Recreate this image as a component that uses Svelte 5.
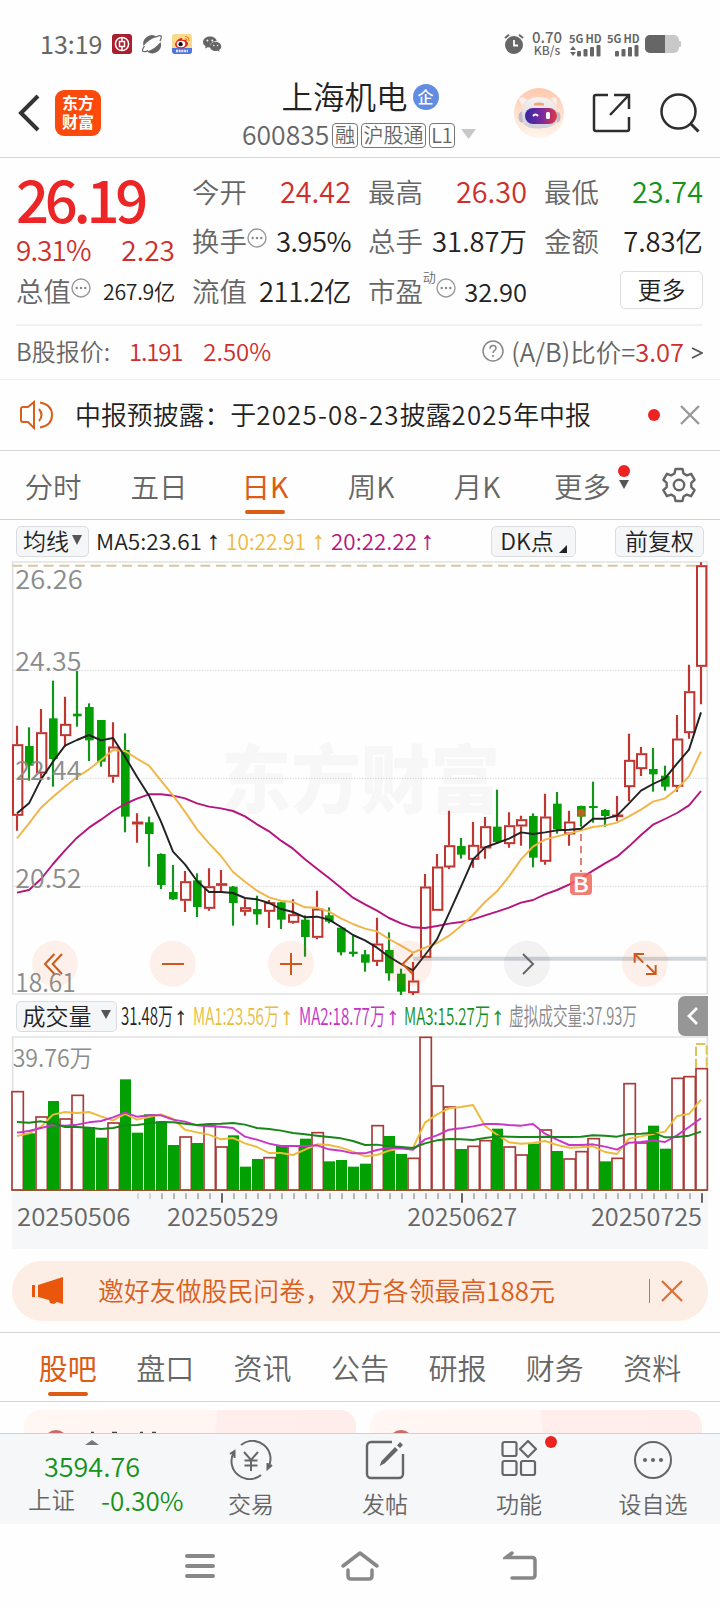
<script lang="ts">
	// y positions are stored in chart units, 3 units per pixel
	const STEP = 36;
	const START = 51;
	const cx = (i: number) => START + STEP * i;

	// [up, high, body top, body bottom, low]
	const candles = [
		[1, 497, 553, 767, 812], [0, 502, 558, 617, 662], [1, 447, 517, 640, 660], [0, 362, 475, 597, 680],
		[1, 410, 492, 528, 560], [0, 333, 461, 469, 500], [0, 430, 441, 541, 603], [0, 480, 480, 605, 620],
		[1, 487, 560, 650, 668], [0, 520, 570, 770, 817], [1, 760, 785, 793, 848], [0, 770, 787, 822, 920],
		[0, 880, 882, 975, 987], [0, 915, 996, 1018, 1020], [1, 933, 964, 1022, 1056], [0, 940, 961, 1041, 1071],
		[1, 925, 979, 1046, 1052], [1, 930, 970, 976, 997], [0, 978, 980, 1029, 1097], [1, 1018, 1042, 1055, 1067],
		[0, 1007, 1047, 1063, 1094], [1, 1020, 1027, 1055, 1104], [0, 1025, 1027, 1079, 1107], [1, 1018, 1063, 1088, 1091],
		[0, 1066, 1079, 1131, 1190], [1, 992, 1046, 1133, 1138], [0, 1042, 1066, 1085, 1090], [0, 1103, 1103, 1177, 1186],
		[0, 1127, 1175, 1182, 1190], [0, 1170, 1183, 1208, 1235], [1, 1073, 1151, 1205, 1218], [0, 1117, 1170, 1240, 1262],
		[0, 1226, 1241, 1295, 1305], [1, 1206, 1262, 1299, 1305], [1, 942, 980, 1193, 1193], [1, 882, 920, 1052, 1052],
		[1, 752, 856, 922, 927], [0, 834, 858, 884, 896], [1, 786, 855, 899, 923], [1, 771, 799, 865, 896],
		[0, 689, 800, 846, 852], [1, 757, 796, 852, 863], [1, 767, 778, 799, 857], [0, 760, 768, 893, 922],
		[1, 701, 770, 905, 914], [0, 696, 731, 808, 821], [1, 752, 785, 823, 857], [0, 737, 738, 770, 800],
		[0, 665, 738, 744, 788], [0, 747, 750, 768, 800], [1, 708, 764, 770, 783], [1, 521, 600, 681, 724],
		[1, 561, 580, 627, 648], [0, 564, 627, 643, 695], [0, 617, 647, 680, 692], [1, 465, 536, 680, 695],
		[1, 314, 394, 519, 536], [1, 7, 16, 320, 433]
	];

	const ma5 = [
		760, 730, 658, 605, 557, 540, 525, 541, 534, 590, 650, 707, 785, 875, 913, 963, 996, 996, 999, 1014, 1018,
		1029, 1047, 1056, 1072, 1070, 1079, 1101, 1125, 1141, 1163, 1190, 1212, 1231, 1185, 1138, 1060, 980, 898,
		862, 849, 836, 817, 822, 817, 811, 809, 806, 776, 776, 767, 730, 692, 672, 655, 611, 569, 457
	];
	const ma10 = [
		835, 790, 743, 710, 680, 651, 628, 600, 570, 573, 596, 617, 662, 706, 755, 808, 850, 888, 936, 965, 992,
		1012, 1022, 1026, 1042, 1043, 1055, 1075, 1092, 1106, 1114, 1137, 1157, 1178, 1163, 1149, 1127, 1098, 1065,
		1026, 994, 949, 898, 860, 839, 829, 821, 811, 801, 796, 788, 769, 749, 725, 715, 687, 649, 575
	];
	const ma20 = [
		998, 990, 957, 912, 871, 833, 803, 779, 753, 732, 716, 703, 703, 707, 715, 730, 740, 745, 753, 769, 793,
		814, 842, 866, 898, 926, 954, 983, 1013, 1033, 1052, 1074, 1090, 1102, 1104, 1098, 1091, 1086, 1078, 1066,
		1055, 1043, 1028, 1020, 1003, 990, 974, 955, 932, 910, 890, 859, 825, 794, 777, 759, 736, 693
	];

	// positive: rising day, negative: falling day
	const volumes = [
		305, -430, 381, -333, 387, 316, -411, -443, 399, -268, -428, -373, -394, -465, 441, -459, 408, 471, -436,
		-530, -507, 503, -468, 468, -446, 428, -514, -510, -530, -521, 407, -438, -492, 505, 142, 288, 351, -477,
		469, 452, -416, 471, 495, -461, 420, -483, 507, 485, 446, -514, 505, 281, 459, -407, -476, 265, 260, 236
	];
	const vol1 = [
		438, 430, 410, 374, 366, 369, 366, 379, 391, 372, 389, 381, 373, 386, 419, 427, 434, 448, 444, 460, 471,
		489, 489, 495, 479, 463, 465, 473, 485, 499, 495, 482, 476, 474, 398, 373, 355, 351, 345, 408, 434, 457,
		461, 459, 453, 465, 473, 472, 469, 486, 492, 446, 439, 432, 425, 378, 372, 329
	];
	const vol2 = [
		428, 423, 414, 405, 407, 404, 397, 393, 382, 368, 380, 376, 376, 389, 395, 406, 409, 410, 414, 440, 449,
		461, 468, 468, 468, 466, 478, 482, 490, 490, 480, 473, 475, 479, 448, 436, 419, 415, 409, 402, 402, 405,
		407, 402, 431, 449, 465, 465, 463, 470, 479, 458, 456, 451, 456, 436, 411, 385
	];
	const vol3 = [
		396, 398, 394, 400, 411, 411, 413, 417, 414, 406, 405, 400, 396, 397, 401, 405, 402, 401, 399, 404, 414,
		417, 422, 429, 433, 437, 441, 445, 453, 465, 464, 469, 471, 474, 460, 451, 447, 448, 450, 444, 439, 440,
		441, 441, 440, 441, 441, 440, 436, 437, 440, 432, 431, 428, 442, 441, 437, 425
	];

	const line = (ys: number[]) => ys.map((y, i) => `${cx(i)},${y}`).join(' ');

	const scale = [
		{ text: '26.26', y: 88, w: 202 },
		{ text: '24.35', y: 333, w: 198 },
		{ text: '22.44', y: 661, w: 198 },
		{ text: '20.52', y: 984, w: 198 },
		{ text: '18.61', y: 1297, w: 181 }
	];
	const dates = [
		{ text: '20250506', x: 51, w: 340 },
		{ text: '20250529', x: 501, w: 334 },
		{ text: '20250627', x: 1222, w: 330 },
		{ text: '20250725', x: 1773, w: 333 }
	];
	const ticks = Array.from({ length: 48 }, (_, k) => 414 + STEP * k);

	const periods = ['分时', '五日', '日K', '周K', '月K'];
	const sections = ['股吧', '盘口', '资讯', '公告', '研报', '财务', '资料'];
</script>

{#snippet fit(text, x, w, y, size, color)}
	<text {x} {y} textLength={w} lengthAdjust="spacingAndGlyphs" font-size={size} fill={color}>{text}</text>
{/snippet}

{#snippet up(x, y, size, color)}
	<text class="arrow" {x} {y} font-size={size} fill={color} stroke={color}>↑</text>
{/snippet}

{#snippet more()}
	<svg class="more-dot" width="20" height="20" viewBox="0 0 20 20">
		<circle cx="10" cy="10" r="9" fill="none" stroke="#999" stroke-width="1.4" />
		<g fill="#888"><circle cx="5.7" cy="10" r="1.2" /><circle cx="10" cy="10" r="1.2" /><circle cx="14.3" cy="10" r="1.2" /></g>
	</svg>
{/snippet}

<div class="screen">
	<div class="status">
		<span class="clock">13:19</span>
		<svg width="20" height="20" viewBox="0 0 20 20">
			<rect width="20" height="20" rx="3" fill="#a81f2d" />
			<circle cx="10" cy="10" r="6.6" fill="none" stroke="#fff" stroke-width="1.5" />
			<path d="M10 3v4M10 13v4M7.500 7.500h5v5h-5z" fill="none" stroke="#fff" stroke-width="1.5" />
		</svg>
		<svg width="20" height="20" viewBox="0 0 20 20">
			<path d="M1.500 12A8.600 8.600 0 0 1 15 3Q7 5 1.500 12z" fill="#666" />
			<path d="M18.500 8A8.600 8.600 0 0 1 5 17.500Q13 15 18.500 8z" fill="#666" />
			<path d="M2.500 12Q-1 17 1.500 17.500T6 16.500M14 3q4-2 5-1t-1 5" fill="none" stroke="#666" stroke-width="1.200" />
		</svg>
		<svg width="20" height="20" viewBox="0 0 20 20">
			<rect width="20" height="20" rx="3" fill="#fbd98a" />
			<path d="M0 14h20v3a3 3 0 0 1-3 3H3a3 3 0 0 1-3-3z" fill="#4f74e0" />
			<path d="M3 10q2-5 6-6 2 0 1.500 2 4-1 4 1.200 2.500 2 1 4-2.500 3.500-7 3.300Q3 14 3 10z" fill="#e0261c" />
			<ellipse cx="9" cy="10" rx="4.300" ry="3.200" fill="#fff" />
			<circle cx="8.600" cy="10.200" r="2.100" fill="#111" />
			<path d="M13 2.500q4 0 4 4.500M13 4.800q2 0 2 2" fill="none" stroke="#ee8a1c" stroke-width="1.200" />
			<path d="M4 17h12" stroke="#dfe7ff" stroke-width="2.500" stroke-dasharray="2 .7" />
		</svg>
		<svg width="20" height="20" viewBox="0 0 20 20">
			<path d="M8 2.500c-4.300 0-7 2.500-7 5.500 0 1.800 1 3.200 2.600 4.200L3 14.500l2.600-1.300 2.400.3c-.6-4 2.500-6.500 6.800-6.300C14.300 4.400 11.500 2.500 8 2.500z" fill="#666" />
			<path d="M13.600 8c-3.500 0-5.700 2-5.700 4.600s2.500 4.500 5.700 4.500l2-.3 2 1-.5-1.700c1.400-.9 2.200-2 2.200-3.500C19.300 10 17 8 13.600 8z" fill="#666" />
			<g fill="#fff"><circle cx="5.500" cy="6.500" r=".9" /><circle cx="10.300" cy="6.500" r=".9" /><circle cx="11.800" cy="11.500" r=".7" /><circle cx="15.500" cy="11.500" r=".7" /></g>
		</svg>
		<div class="status-right">
			<svg width="20" height="20" viewBox="0 0 20 20">
				<circle cx="10" cy="11" r="9" fill="#666" />
				<path d="M10 6v5.500h4" fill="none" stroke="#fff" stroke-width="1.800" />
				<path d="M1 4l4-3.200M19 4l-4-3.200" stroke="#666" stroke-width="2" />
			</svg>
			<div class="speed"><b>0.70</b><span>KB/s</span></div>
			{#each [true, false] as data}
				<div class="signal">
					<b>5G HD</b>
					<svg width="32" height="12" viewBox="0 0 32 12" fill="#666">
						{#if data}<path d="M1 5l3-4 3 4zM1 7l3 4 3-4z" />{/if}
						<rect x="8" y="6" width="4" height="5.500" rx="1" /><rect x="14.500" y="4" width="4" height="7.500" rx="1" />
						<rect x="21" y="2" width="4" height="9.500" rx="1" /><rect x="27.500" y="0" width="4" height="11.500" rx="1" />
					</svg>
				</div>
			{/each}
			<svg width="36" height="18" viewBox="0 0 36 18">
				<rect width="34" height="18" rx="5" fill="#c9c9c9" /><rect x="33" y="6" width="3" height="6" rx="1" fill="#c9c9c9" />
				<path d="M5 0h15v18H5a5 5 0 0 1-5-5V5a5 5 0 0 1 5-5z" fill="#666" />
			</svg>
		</div>
	</div>

	<header>
		<div class="head-left">
			<svg width="22" height="38" viewBox="0 0 22 38"><path d="M20 2L3 19l17 17" fill="none" stroke="#333" stroke-width="4" /></svg>
			<div class="logo"><span>东方</span><span>财富</span></div>
		</div>
		<div class="head-mid">
			<div class="title">上海机电<span class="badge">企</span></div>
			<div class="code">
				<span class="num">600835</span><i>融</i><i class="wide">沪股通</i><i>L1</i>
				<svg width="15" height="10" viewBox="0 0 15 10"><path d="M0 0h15L7.500 10z" fill="#c8c8c8" /></svg>
			</div>
		</div>
		<div class="head-right">
			<svg width="50" height="50" viewBox="0 0 50 50">
				<defs>
					<linearGradient id="halo" x2="0" y2="1"><stop stop-color="#ffc9ac" /><stop offset="1" stop-color="#fff5ee" /></linearGradient>
					<linearGradient id="shell" x2="0" y2="1"><stop stop-color="#f8f3f2" /><stop offset="1" stop-color="#d2ced8" /></linearGradient>
					<linearGradient id="visor"><stop stop-color="#3427a0" /><stop offset=".55" stop-color="#7d2a9c" /><stop offset="1" stop-color="#e5383d" /></linearGradient>
				</defs>
				<circle cx="25" cy="25" r="25" fill="url(#halo)" />
				<path d="M5 11q4-4 8 1l-5 6zM37 10q5-2 6 2l-1 6z" fill="#f7f0ee" />
				<ellipse cx="8" cy="29" rx="3.500" ry="5.500" fill="#bdbac9" /><ellipse cx="43" cy="29" rx="3.500" ry="5.500" fill="#bdbac9" />
				<path d="M8 24Q10 9 25 9t18 14v11q-5 6.500-18 6.500T9 35z" fill="url(#shell)" />
				<path d="M20 15.500q5-2 10 0v2H20z" fill="#f0a474" />
				<rect x="11" y="20" width="32" height="16" rx="8" fill="url(#visor)" />
				<path d="M19 28q2.500-3 5 0" fill="none" stroke="#fff" stroke-width="2" /><rect x="32" y="24" width="4" height="7" rx="1.500" fill="#fff" />
			</svg>
			<svg width="40" height="40" viewBox="0 0 40 40" fill="none" stroke="#2e2e2e" stroke-width="2.500">
				<path d="M16 2H4a2 2 0 0 0-2 2v32a2 2 0 0 0 2 2h31a2 2 0 0 0 2-2V24M22 2h15v14M36 3L18 22" />
			</svg>
			<svg width="40" height="40" viewBox="0 0 40 40" fill="none" stroke="#2e2e2e" stroke-width="2.500">
				<circle cx="18.500" cy="18.500" r="17" /><path d="M31 31l7.500 7.500" stroke-width="3" />
			</svg>
		</div>
	</header>

	<section class="quote">
		<div class="price">
			<strong>26.19</strong>
			<div class="row red"><span class="pct">9.31%</span><span>2.23</span></div>
		</div>
		<div class="row"><label>今开</label><span class="num red">24.42</span></div>
		<div class="row"><label>最高</label><span class="num red">26.30</span></div>
		<div class="row"><label>最低</label><span class="num green">23.74</span></div>
		<div class="row"><label>换手{@render more()}</label><span class="rate">3.95%</span></div>
		<div class="row"><label>总手</label><span>31.87万</span></div>
		<div class="row"><label>金额</label><span>7.83亿</span></div>
		<div class="row"><label>总值{@render more()}</label><span class="small">267.9亿</span></div>
		<div class="row"><label>流值</label><span class="rate">211.2亿</span></div>
		<div class="row"><label>市盈<sup>动</sup>{@render more()}</label><span class="mid">32.90</span></div>
		<div class="row end"><button class="more-btn">更多</button></div>
	</section>

	<section class="bshare">
		<span>B股报价:</span><span class="red b1">1.191</span><span class="red b2">2.50%</span>
		<span class="ratio">
			<svg width="22" height="22" viewBox="0 0 22 22">
				<circle cx="11" cy="11" r="10" fill="none" stroke="#888" stroke-width="1.500" />
				<path d="M8 8.800q0-3.300 3-3.300t3 2.700q0 1.500-1.500 2.400T11 13" fill="none" stroke="#888" stroke-width="1.500" /><circle cx="11" cy="16" r="1.100" fill="#888" />
			</svg>
			(A/B)比价=<em class="red">3.07</em><svg class="gt" width="12" height="14" viewBox="0 0 12 14"><path d="M1 2l10 5-10 5" fill="none" stroke="#555" stroke-width="1.800" /></svg>
		</span>
	</section>

	<section class="notice">
		<svg width="34" height="30" viewBox="0 0 34 30" fill="none" stroke="#d9601c" stroke-width="2">
			<path d="M14 2v26L8 22H3a2 2 0 0 1-2-2V9a2 2 0 0 1 2-2h5z" /><path d="M19 9q5 6 0 12M20 2.500q12 2 12 12.500T20 27.500" />
		</svg>
		<p>中报预披露：于<em>2025-08-23</em>披露<em>2025</em>年中报</p>
		<i class="dot"></i>
		<svg width="20" height="20" viewBox="0 0 20 20"><path d="M1 1l18 18M19 1L1 19" stroke="#999" stroke-width="2.400" /></svg>
	</section>

	<nav class="periods">
		{#each periods as p}
			<span class:active={p === '日K'}>{p}</span>
		{/each}
		<span class="period-more">更多<svg width="12" height="10" viewBox="0 0 12 10"><path d="M1 0h10L6 9z" fill="#555" /></svg><i class="dot"></i></span>
		<svg class="gear" width="36" height="36" viewBox="0 0 36 36" fill="none" stroke="#666" stroke-width="2.400" stroke-linejoin="round">
			<path d="M14.500 2h7l1 4.500 3.300 1.900 4.300-1.600 3.500 6-3.300 3.100v4.200l3.300 3.100-3.500 6-4.300-1.600-3.300 1.900-1 4.500h-7l-1-4.500-3.300-1.900-4.300 1.600-3.500-6 3.300-3.100v-4.200l-3.300-3.100 3.500-6 4.300 1.600 3.300-1.900z" />
			<circle cx="18" cy="18" r="5.200" />
		</svg>
	</nav>

	<div class="legend">
		<button class="chip">均线<svg width="10" height="10" viewBox="0 0 10 10"><path d="M0 0h10L5 10z" fill="#555" /></svg></button>
		<svg width="380" height="40" viewBox="94 0 380 40">
			{@render fit('MA5:23.61', 96, 106, 28.5, 22, '#222')}
			{@render up(207, 28, 25, '#222')}
			{@render fit('10:22.91', 226, 80, 28.5, 22, '#efb93f')}
			{@render up(312, 28, 25, '#efb93f')}
			{@render fit('20:22.22', 331, 86, 28.5, 22, '#b5157d')}
			{@render up(421, 28, 25, '#b5157d')}
		</svg>
		<button class="chip dk">DK点<svg width="8" height="8" viewBox="0 0 8 8"><path d="M8 0v8H0z" fill="#222" /></svg></button>
		<button class="chip adj">前复权</button>
	</div>

	<svg class="kline" width="720" height="436" viewBox="0 0 2160 1308">
		<g class="watermark">{@render fit('东方财富', 664, 836, 742, 222, '#f7f7f7')}</g>
		<path d="M38 1302V6H2122V1302z" fill="none" stroke="#e2e2e2" stroke-width="5" />
		<path d="M38 331H2122M38 655H2122M38 979H2122" stroke="#c9c9c9" stroke-width="3" stroke-dasharray="3 5" />
		<path d="M26 17H2100" stroke="#d8c6a8" stroke-width="6" stroke-dasharray="30 17" stroke-dashoffset="-11" />
		<path d="M1240 1196H2120" stroke="#cfd4da" stroke-width="12" />
		{#each candles as [rise, high, top, bottom, low], i}
			{#if rise}
				<path d="M{cx(i)} {high}V{top}M{cx(i)} {bottom}V{low}" stroke="#bf3530" stroke-width="6.500" />
				<rect x={cx(i) - 12} y={top + 2.5} width="28" height={Math.max(bottom - top - 5, 2)} fill="none" stroke="#bf3530" stroke-width="6" />
			{:else}
				<path d="M{cx(i)} {high}V{low}" stroke="#12951a" stroke-width="6.500" />
				<rect x={cx(i) - 12} y={top} width="26" height={bottom - top} fill="#02a002" />
			{/if}
		{/each}
		<polyline points={line(ma20)} stroke="#b5157d" class="ma" />
		<polyline points={line(ma10)} stroke="#f0b64a" class="ma" />
		<polyline points={line(ma5)} stroke="#222" class="ma" />
		{#each scale as s}
			{@render fit(s.text, 46, s.w, s.y, 78, '#8c8c8c')}
		{/each}
		<circle cx="1743" cy="758" r="12" fill="#b5651d" />
		<path d="M1743 822V936" stroke="#e07f74" stroke-width="6" stroke-dasharray="22 14" />
		<rect x="1710" y="938" width="66" height="67" rx="12" fill="#ef6558" fill-opacity=".85" />
		<text class="buy" x="1743" y="996" text-anchor="middle">B</text>
		{#each [165, 518, 873, 1227, 1581, 1935] as x}
			<circle cx={x} cy="1211" r="69" fill={x === 1581 ? '#777' : '#f0641e'} fill-opacity=".09" />
		{/each}
		<g fill="none" stroke="#cc5a1c" stroke-width="6">
			<path d="M163 1182l-28 30 28 30M186 1182l-28 30 28 30M486 1212H552M840 1212H906M873 1179V1245M1238 1182l-30 30 30 30" />
			<path d="M1904 1208V1182H1932M1904 1182L1930 1208M1967 1215V1242H1938M1967 1242L1940 1215" />
			<path d="M1569 1182l30 30-30 30" stroke="#666" />
		</g>
	</svg>

	<div class="legend vol">
		<button class="chip">成交量<svg width="10" height="9" viewBox="0 0 10 9"><path d="M0 0h10L5 9z" fill="#555" /></svg></button>
		<svg width="524" height="40" viewBox="118 0 524 40">
			{@render fit('31.48万', 121, 52, 29, 24, '#222')}
			{@render up(175, 28, 24, '#222')}
			{@render fit('MA1:23.56万', 193, 86, 29, 24, '#e8bd3a')}
			{@render up(281, 28, 24, '#e8bd3a')}
			{@render fit('MA2:18.77万', 299, 86, 29, 24, '#c530c5')}
			{@render up(387, 28, 24, '#c530c5')}
			{@render fit('MA3:15.27万', 404, 86, 29, 24, '#14911c')}
			{@render up(492, 28, 24, '#14911c')}
			{@render fit('虚拟成交量:37.93万', 509, 128, 29, 24, '#888')}
		</svg>
		<span class="fold"><svg width="12" height="18" viewBox="0 0 12 18"><path d="M10 1L2 9l8 8" fill="none" stroke="#fff" stroke-width="2.800" /></svg></span>
	</div>

	<svg class="volume" width="720" height="213" viewBox="0 138 2160 639">
		<rect x="36" y="604" width="2088" height="173" fill="#f6f7f9" />
		<path d="M38 602V141H2122V602" fill="none" stroke="#e2e2e2" stroke-width="5" />
		{@render fit('39.76万', 38, 240, 231, 72, '#8c8c8c')}
		{#each volumes as v, i}
			{#if v > 0}
				<rect x={cx(i) - 15} y={v} width="34" height={600 - v} fill="#fff" stroke="#ab3a36" stroke-width="5" />
			{:else}
				<rect x={cx(i) - 15} y={-v} width="33" height={602 + v} fill="#02a002" />
			{/if}
		{/each}
		<path d="M38 601H2122" stroke="#96552f" stroke-width="4" />
		<path d="M2088 234V162H2120V234" fill="none" stroke="#dbc653" stroke-width="6" stroke-dasharray="28 8" />
		<polyline points={line(vol1)} stroke="#edbb3a" class="ma" />
		<polyline points={line(vol2)} stroke="#c836c8" class="ma" />
		<polyline points={line(vol3)} stroke="#19861c" class="ma" />
		{#each ticks as x, k}
			<path d="M{x} 610V{(k - 7) % 20 === 0 ? 638 : 627}" stroke={(k - 7) % 20 === 0 ? '#666' : '#aaa'} stroke-width={(k - 7) % 20 === 0 ? 6 : 5} opacity={k < 2 ? 0.5 : 1} />
		{/each}
		{#each dates as d}
			{@render fit(d.text, d.x, d.w, 708, 74, '#666')}
		{/each}
	</svg>

	<div class="banner">
		<svg width="32" height="28" viewBox="0 0 32 28" fill="#e9570d"><path d="M0 8h3v12H0zM6 8L31 0v27l-6-2-3 2-4-1-1-3L6 20z" /></svg>
		<p>邀好友做股民问卷，双方各领最高188元</p>
		<i></i>
		<svg width="22" height="22" viewBox="0 0 22 22"><path d="M1 1l20 20M21 1L1 21" stroke="#dc7038" stroke-width="2.200" /></svg>
	</div>

	<nav class="sections">
		{#each sections as s, i}
			<span class:active={i === 0}>{s}</span>
		{/each}
	</nav>

	<div class="cards">
		<div class="card">
			<svg width="332" height="23" viewBox="0 0 332 23">
				<path d="M194 0h138v23H191z" fill="#ffe9e7" opacity=".6" />
				<circle cx="32" cy="32" r="12" fill="#c96a68" />
				<path d="M67 22.500h3M88 22.500h5M116 22.500h3M128 22.500h4" stroke="#444" stroke-width="1.500" />
			</svg>
		</div>
		<div class="card">
			<svg width="332" height="23" viewBox="0 0 332 23">
				<path d="M171 0h161v23H173z" fill="#ffe9e7" opacity=".6" />
				<circle cx="31" cy="32" r="12" fill="#c96a68" />
			</svg>
		</div>
	</div>

	<div class="toolbar">
		<div class="index">
			<svg width="14" height="5" viewBox="0 0 14 5"><path d="M0 5l7-5 7 5z" fill="#777" /></svg>
			<span class="green point">3594.76</span>
			<div><span>上证</span><span class="green chg">-0.30%</span></div>
		</div>
		<div class="tool">
			<svg width="44" height="40" viewBox="0 0 44 40" fill="none" stroke="#666" stroke-width="2">
				<path d="M12 5A18 18 0 0 1 39 28M43 25l-4.500 4v-6M32 35A18 18 0 0 1 5 12M1 14l4.500-3v7M15 12l7 8 7-8M22 20v11M15.500 20.500h13M15.500 25.500h13" />
			</svg>
			<span>交易</span>
		</div>
		<div class="tool">
			<svg width="40" height="40" viewBox="0 0 40 40" fill="none" stroke="#666" stroke-width="2.400">
				<path d="M27 2H6a4 4 0 0 0-4 4v28a4 4 0 0 0 4 4h28a4 4 0 0 0 4-4V14" />
				<path d="M14.500 26l2-5L30 7l3 3-13.500 13.500zM32 5.500l3-3.500 3 3-3 3z" fill="#666" stroke="none" />
			</svg>
			<span>发帖</span>
		</div>
		<div class="tool">
			<svg width="36" height="38" viewBox="0 0 36 38" fill="none" stroke="#666" stroke-width="2.200">
				<rect x="1.500" y="2" width="14" height="14" rx="2" /><rect x="1.500" y="21" width="14" height="14" rx="2" /><rect x="20" y="21" width="14" height="14" rx="2" /><path d="M27 1l8 8-8 8-8-8z" stroke-linejoin="round" />
			</svg>
			<span>功能</span>
			<i class="dot"></i>
		</div>
		<div class="tool">
			<svg width="40" height="40" viewBox="0 0 40 40">
				<circle cx="20" cy="20" r="18" fill="none" stroke="#666" stroke-width="2" />
				<g fill="#666"><circle cx="12" cy="20" r="2.100" /><circle cx="20" cy="20" r="2.100" /><circle cx="28" cy="20" r="2.100" /></g>
			</svg>
			<span>设自选</span>
		</div>
	</div>

	<div class="sysnav">
		<svg width="32" height="30" viewBox="0 0 32 30"><path d="M3 5H29M3 15H29M3 25H29" stroke="#888" stroke-width="4" stroke-linecap="round" /></svg>
		<svg width="38" height="30" viewBox="0 0 38 30" fill="none" stroke="#888" stroke-width="3.500" stroke-linecap="round" stroke-linejoin="round"><path d="M2 15L19 2l17 13M7 19v6q0 3 3 3h18q3 0 3-3v-6" /></svg>
		<svg width="34" height="30" viewBox="0 0 34 30" fill="none" stroke="#888" stroke-width="3.500" stroke-linecap="round"><path d="M9 2L3 6.500H29q3 0 3 3V24q0 3-3 3H9" /></svg>
	</div>
</div>

<style>
	:global(body) {
		margin: 0;
		background: #fff;
	}

	.screen {
		width: 720px;
		height: 1608px;
		overflow: hidden;
		background: #fefefe;
		font-family: 'Noto Sans CJK SC', 'Noto Sans', sans-serif;
		color: #666;
		font-weight: 350;
		line-height: 1;
	}

	svg {
		display: block;
		flex: none;
	}

	i,
	em {
		font-style: normal;
	}

	button {
		font: inherit;
		padding: 0;
	}

	.red {
		color: #cf2f2c;
	}

	.green {
		color: #15931a;
	}

	.dot {
		width: 12px;
		height: 12px;
		border-radius: 50%;
		background: #ed2323;
		flex: none;
	}

	.arrow {
		font-family: 'Liberation Sans', sans-serif;
		stroke-width: 0.4;
	}

	.status {
		height: 76px;
		box-sizing: border-box;
		padding: 12px 39px 0 40px;
		display: flex;
		align-items: center;
		gap: 10px;
	}

	.clock {
		font-size: 25px;
		font-weight: 400;
		width: 62px;
		margin-top: -2px;
	}

	.status-right {
		margin-left: auto;
		display: flex;
		align-items: center;
		gap: 6px;
	}

	.speed {
		display: flex;
		flex-direction: column;
		align-items: center;
		width: 34px;
		margin-right: -1px;
		margin-top: -2px;
		font-size: 12px;
		font-weight: 500;
		line-height: 12px;
	}

	.speed b {
		font-size: 15px;
		font-weight: 500;
		line-height: 14px;
	}

	.signal {
		display: flex;
		flex-direction: column;
		gap: 1px;
		width: 32px;
		font-size: 11px;
		line-height: 12px;
		white-space: nowrap;
	}

	.signal b {
		font-weight: 700;
		letter-spacing: -0.1px;
	}

	header {
		height: 81px;
		border-bottom: 1px solid #d5d5d5;
		display: grid;
		grid-template-columns: 230px 258px 232px;
	}

	.head-left {
		display: flex;
		align-items: center;
		gap: 15px;
		padding-left: 18px;
		padding-bottom: 8px;
	}

	.logo {
		width: 46px;
		height: 46px;
		border-radius: 9px;
		background: #fb4a0b;
		color: #fff;
		font-size: 16px;
		font-weight: 700;
		display: flex;
		flex-direction: column;
		align-items: center;
		justify-content: center;
		gap: 3px;
		padding-bottom: 2px;
		box-sizing: border-box;
	}

	.head-mid {
		display: flex;
		flex-direction: column;
		align-items: center;
	}

	.title {
		display: flex;
		align-items: center;
		height: 39px;
		font-size: 31.500px;
		color: #222;
		gap: 5px;
		padding-left: 2px;
	}

	.badge {
		width: 26px;
		height: 26px;
		border-radius: 50%;
		background: #628be2;
		color: #fff;
		font-size: 16px;
		font-weight: 500;
		line-height: 25px;
		text-align: center;
		margin-top: 3px;
	}

	.code {
		display: flex;
		align-items: center;
		gap: 3px;
		height: 38px;
	}

	.code .num {
		font-size: 26.500px;
		width: 88px;
		margin-right: -1px;
	}

	.code i {
		border: 1px solid #777;
		border-radius: 4px;
		width: 24px;
		height: 23px;
		line-height: 22px;
		font-size: 20px;
		text-align: center;
		margin-top: 2px;
	}

	.code .wide {
		width: 63px;
	}

	.code svg {
		margin-left: 3px;
	}

	.head-right {
		display: flex;
		align-items: center;
		gap: 28px;
		padding-left: 26px;
		padding-bottom: 8px;
	}

	.quote {
		margin: 0 17px 0 16px;
		padding-top: 10px;
		box-sizing: border-box;
		border-bottom: 2px solid #f2f2f2;
		height: 168px;
		display: grid;
		grid-template-columns: repeat(4, 159px);
		grid-template-rows: 47px 51px 49px;
		column-gap: 17px;
		font-size: 27.4px;
		color: #222;
	}

	.price {
		grid-row: span 2;
	}

	.price strong {
		display: block;
		height: 64px;
		line-height: 60px;
		font-size: 58px;
		font-weight: 500;
		color: #ec2526;
		letter-spacing: -4.3px;
	}

	.row {
		display: flex;
		align-items: center;
		justify-content: space-between;
		white-space: nowrap;
	}

	.price .row {
		height: 34px;
		font-size: 28px;
	}

	.row .num {
		font-size: 28.8px;
	}

	.end {
		justify-content: flex-end;
	}

	.row label {
		display: flex;
		align-items: center;
		color: #666;
	}

	.pct {
		letter-spacing: -0.9px;
	}

	.rate {
		letter-spacing: -0.5px;
	}

	.row .small {
		font-size: 21.3px;
		letter-spacing: -0.3px;
	}

	.row .mid {
		font-size: 25.500px;
	}

	sup {
		font-size: 13px;
		align-self: flex-start;
		margin-top: -7px;
	}

	.more-dot {
		margin-top: -5px;
	}

	.more-btn {
		width: 83px;
		height: 38px;
		border: 1px solid #dcdfe0;
		border-radius: 5px;
		background: #fff;
		color: #222;
		font-size: 24px;
		line-height: 30px;
		padding-bottom: 3px;
		margin-bottom: 1px;
	}

	.bshare {
		height: 54px;
		box-sizing: border-box;
		padding: 0 17px 3px 16px;
		border-bottom: 1px solid #eee;
		display: flex;
		align-items: center;
		font-size: 24px;
	}

	.b1 {
		margin-left: 19px;
		letter-spacing: -1.2px;
	}

	.b2 {
		margin-left: 21px;
	}

	.ratio {
		margin-left: auto;
		display: flex;
		align-items: center;
		font-size: 25.500px;
	}

	.ratio svg:first-child {
		margin-right: 7px;
	}

	.ratio .gt {
		margin: 3px 0 0 7px;
	}

	.notice {
		height: 70px;
		border-bottom: 1px solid #d5d5d5;
		display: flex;
		align-items: center;
		padding: 0 20px;
		color: #222;
	}

	.notice p {
		margin: -2px 0 0 21px;
		width: 573px;
		font-size: 25.900px;
		white-space: nowrap;
	}

	.notice em {
		letter-spacing: 1.2px;
	}

	.notice .dot {
		margin-right: 20px;
	}

	.periods {
		height: 68px;
		border-bottom: 1px solid #d5d5d5;
		display: grid;
		grid-template-columns: repeat(6, 106px) 1fr;
		grid-template-rows: 68px;
		justify-items: center;
		font-size: 28.500px;
		line-height: 69px;
	}

	.periods .active,
	.sections .active {
		color: #dd5c14;
		position: relative;
		font-weight: 400;
	}

	.active::after {
		content: '';
		position: absolute;
		left: 50%;
		bottom: 5px;
		width: 40px;
		height: 4px;
		margin-left: -20px;
		border-radius: 2px;
		background: #dd5c14;
	}

	.period-more {
		position: relative;
		display: flex;
		align-items: center;
		padding-left: 18px;
		gap: 7px;
	}

	.period-more .dot {
		position: absolute;
		right: 0;
		top: 14px;
	}

	.gear {
		align-self: center;
		margin-left: 2px;
	}

	.legend {
		height: 40px;
		display: flex;
		align-items: center;
		padding: 2px 16px 0;
		box-sizing: border-box;
	}

	.chip {
		height: 31px;
		width: 73px;
		box-sizing: border-box;
		border: 1px solid #d9dde1;
		border-radius: 5px;
		background: #f5f6f8;
		color: #222;
		font-size: 23px;
		line-height: 26px;
		white-space: nowrap;
		display: flex;
		align-items: center;
		justify-content: center;
		gap: 3px;
		padding-bottom: 3px;
	}

	.legend > svg {
		margin-left: 5px;
		overflow: visible;
	}

	.dk {
		width: 85px;
		margin-left: 17px;
		gap: 5px;
	}

	.dk svg {
		align-self: flex-end;
	}

	.adj {
		width: 89px;
		margin-left: 39px;
	}

	.vol {
		height: 40px;
		padding: 0 12px 0 16px;
	}

	.vol .chip {
		width: 101px;
		gap: 9px;
	}

	.vol > svg {
		margin-left: 1px;
	}

	.fold {
		margin-left: auto;
		width: 30px;
		height: 40px;
		border-radius: 7px 0 0 7px;
		background: #969696;
		display: flex;
		align-items: center;
		justify-content: center;
	}

	.watermark {
		font-weight: 900;
	}

	.ma {
		fill: none;
		stroke-width: 5.800;
		stroke-linejoin: round;
	}

	.buy {
		font-family: 'Liberation Sans', sans-serif;
		font-size: 68px;
		font-weight: 400;
		fill: #fff;
		stroke: #fff;
		stroke-width: 2;
	}

	.banner {
		margin: 12px 12px 11px;
		height: 60px;
		border-radius: 30px;
		background: #fdeee5;
		color: #d9601c;
		display: flex;
		align-items: center;
		padding: 0 24px 0 20px;
	}

	.banner p {
		margin: -2px 0 0 34px;
		width: 551px;
		font-size: 25.900px;
		white-space: nowrap;
	}

	.banner i {
		width: 1px;
		height: 24px;
		background: #c8743f;
		margin-right: 11px;
	}

	.sections {
		height: 68px;
		border-top: 1px solid #d5d5d5;
		border-bottom: 1px solid #d5d5d5;
		padding: 0 19px;
		display: grid;
		grid-template-columns: repeat(7, 1fr);
		text-align: center;
		font-size: 29px;
		line-height: 68px;
	}

	.cards {
		height: 31px;
		box-sizing: border-box;
		padding: 8px 18px 0 24px;
		display: flex;
		gap: 14px;
		overflow: hidden;
	}

	.card {
		width: 332px;
		height: 60px;
		flex: none;
		border-radius: 16px;
		overflow: hidden;
		background: linear-gradient(90deg, #fff7f4, #fff3f1);
	}

	.toolbar {
		height: 91px;
		box-sizing: border-box;
		border-top: 1px solid #cfd1d6;
		background: #f6f7f9;
		display: grid;
		grid-template-columns: 184px repeat(4, 134px);
		font-size: 23px;
	}

	.index {
		display: flex;
		flex-direction: column;
		align-items: center;
		padding-top: 6px;
	}

	.index > div {
		display: flex;
		align-items: center;
		align-self: stretch;
		padding-left: 28px;
		gap: 26px;
		height: 32px;
		font-size: 23.500px;
	}

	.point {
		font-size: 27px;
		height: 39px;
		line-height: 41px;
	}

	.index .chg {
		font-size: 26px;
	}

	.tool {
		position: relative;
		display: flex;
		flex-direction: column;
		align-items: center;
		padding-top: 6px;
	}

	.tool span {
		margin-top: auto;
		padding-bottom: 9px;
	}

	.tool .dot {
		position: absolute;
		left: 93px;
		top: 2px;
	}

	.sysnav {
		height: 84px;
		box-sizing: border-box;
		padding: 0 183px 1px 184px;
		display: flex;
		align-items: center;
		justify-content: space-between;
	}
</style>
